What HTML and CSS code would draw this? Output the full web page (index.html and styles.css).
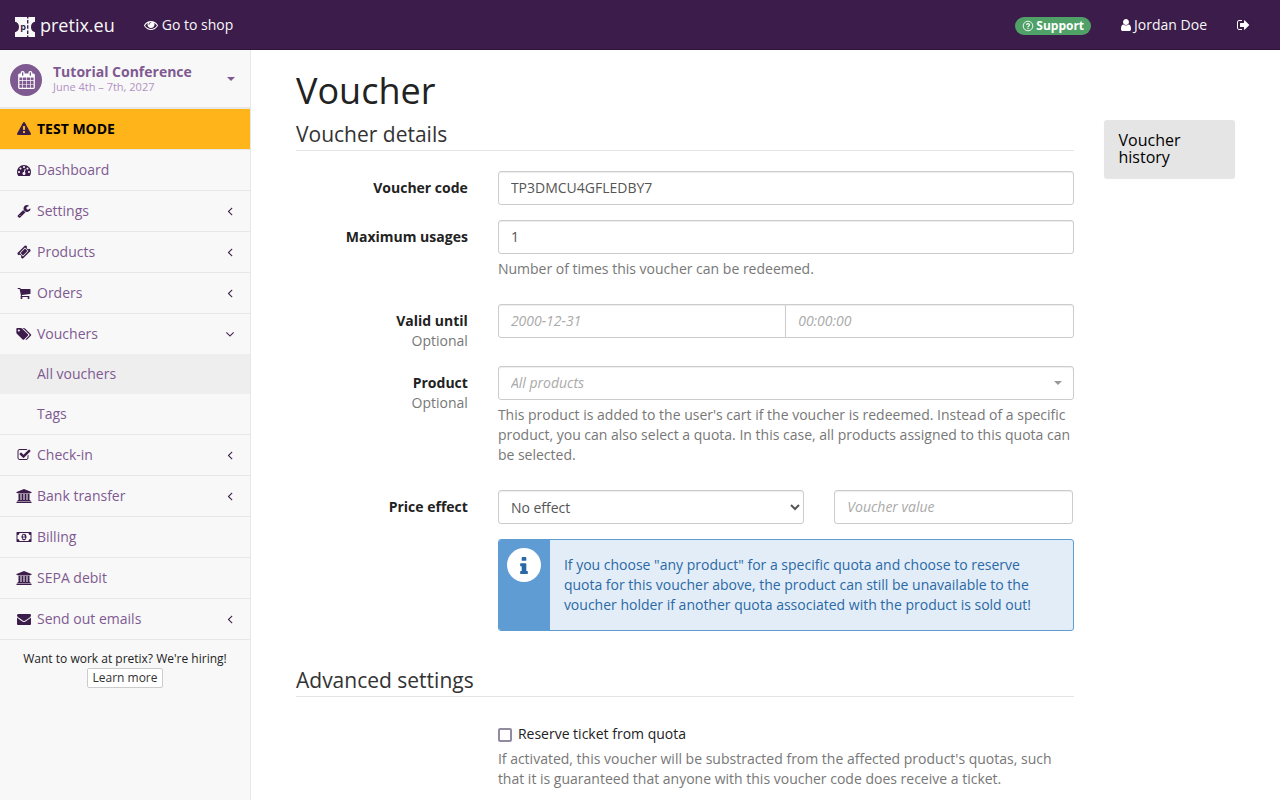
FILE: index.html
```html
<!DOCTYPE html>
<html lang="en">
<head>
<meta charset="utf-8">
<title>Voucher</title>
<link rel="stylesheet" href="styles.css">
</head>
<body>
<svg class="sprite" aria-hidden="true">
  <symbol id="i-angle-left" viewBox="0 0 1792 1792"><path d="M1203 544q0 13-10 23l-393 393 393 393q10 10 10 23t-10 23l-50 50q-10 10-23 10t-23-10l-466-466q-10-10-10-23t10-23l466-466q10-10 23-10t23 10l50 50q10 10 10 23z"/></symbol>
  <symbol id="i-angle-down" viewBox="0 0 1792 1792"><path d="M1395 736q0 13-10 23l-466 466q-10 10-23 10t-23-10l-466-466q-10-10-10-23t10-23l50-50q10-10 23-10t23 10l393 393 393-393q10-10 23-10t23 10l50 50q10 10 10 23z"/></symbol>
  <symbol id="i-bank" viewBox="0 0 1920 1792"><path d="M960 0l960 384v128h-128q0 26-20.500 45t-48.500 19h-1526q-28 0-48.500-19t-20.500-45h-128v-128zm-704 640h256v768h128v-768h256v768h128v-768h256v768h128v-768h256v768h59q28 0 48.500 19t20.500 45v64h-1664v-64q0-26 20.500-45t48.500-19h59v-768zm1595 960q28 0 48.500 19t20.500 45v128h-1920v-128q0-26 20.500-45t48.500-19h1782z"/></symbol>
</svg>

<header class="topbar">
  <a class="brand" href="#">
    <svg class="logo" viewBox="0 0 20 20" aria-hidden="true">
      <path fill="#f8f8f8" d="M0 0h12v1.500h1.400V0H20v4.800C17.500 5.200 16 7.200 16 10s1.500 4.800 4 5.200V20h-6.600v-1.500H12V20H0v-4.800C2.500 14.800 4 12.800 4 10S2.500 5.200 0 4.800z"/>
      <path stroke="#3b1c4a" stroke-width="1.400" d="M12.700 3v3.500M12.700 8.200v3.600M12.700 13.500V17"/>
      <text x="5.200" y="12.800" font-size="9" font-weight="700" fill="#3b1c4a">p</text>
    </svg>
    <span>pretix.eu</span>
  </a>
  <a class="toplink" href="#">
    <svg class="icon" viewBox="0 0 1792 1792" aria-hidden="true"><path d="M1664 960q-152-236-381-353 61 104 61 225 0 185-131.500 316.500t-316.500 131.500-316.500-131.500-131.500-316.500q0-121 61-225-229 117-381 353 133 205 333.500 326.500t434.500 121.500 434.500-121.500 333.500-326.500zm-720-384q0-20-14-34t-34-14q-125 0-214.500 89.500t-89.500 214.500q0 20 14 34t34 14 34-14 14-34q0-86 61-147t147-61q20 0 34-14t14-34zm848 384q0 34-20 69-140 230-376.500 368.500t-499.500 138.500-499.500-139-376.500-368q-20-35-20-69t20-69q140-229 376.500-368t499.500-139 499.500 139 376.500 368q20 35 20 69z"/></svg>
    <span>Go to shop</span>
  </a>
  <nav class="topright" aria-label="Account">
    <a class="toplink" href="#"><span class="badge">
      <svg class="badge-icon" viewBox="0 0 12 12" aria-hidden="true"><circle cx="6" cy="6" r="4.800" fill="none" stroke="#fff" stroke-width=".9"/><path d="M4.500 4.900Q4.600 3.600 6 3.600T7.500 4.900Q7.500 5.500 6.700 6T6 7.100M6 7.800v1.100" fill="none" stroke="#fff" stroke-width="1.100"/></svg>
      <span>Support</span></span></a>
    <a class="toplink user" href="#">
      <svg class="icon user-icon" viewBox="256 0 1280 1792" aria-hidden="true"><path d="M1536 1399q0 109-62.500 187t-150.500 78h-854q-88 0-150.500-78t-62.500-187q0-85 8.500-160.500t31.500-152 58.500-131 94-89 134.500-34.500q131 128 313 128t313-128q76 0 134.500 34.500t94 89 58.500 131 31.500 152 8.500 160.500zm-256-887q0 159-112.500 271.500t-271.500 112.500-271.500-112.500-112.500-271.500 112.500-271.500 271.500-112.500 271.500 112.500 112.500 271.500z"/></svg>
      <span>Jordan Doe</span>
    </a>
    <a class="toplink" href="#" aria-label="Log out">
      <svg class="icon out-icon" viewBox="64 0 1664 1792" aria-hidden="true"><path d="M704 1440q0 4 1 20t.5 26.500-3 23.500-10 19.500-20.500 6.500h-320q-119 0-203.500-84.500t-84.500-203.500v-704q0-119 84.500-203.500t203.500-84.500h320q13 0 22.500 9.500t9.500 22.500q0 4 1 20t.5 26.500-3 23.500-10 19.500-20.500 6.500h-320q-66 0-113 47t-47 113v704q0 66 47 113t113 47h312l11.500 1 11.500 3 8 5.500 7 9 2 13.500zm928-544q0 26-19 45l-544 544q-19 19-45 19t-45-19-19-45v-288h-448q-26 0-45-19t-19-45v-384q0-26 19-45t45-19h448v-288q0-26 19-45t45-19 45 19l544 544q19 19 19 45z"/></svg>
    </a>
  </nav>
</header>

<div class="layout">
  <aside class="sidebar">
    <button class="event" type="button">
      <span class="event-icon"><svg viewBox="64 0 1664 1792" aria-hidden="true"><path d="M192 1664h288v-288h-288v288zm352 0h320v-288h-320v288zm-352-352h288v-320h-288v320zm352 0h320v-320h-320v320zm-352-384h288v-288h-288v288zm736 736h320v-288h-320v288zm-384-736h320v-288h-320v288zm768 736h288v-288h-288v288zm-384-352h320v-320h-320v320zm-352-864v-288q0-13-9.500-22.500t-22.500-9.500h-64q-13 0-22.500 9.500t-9.500 22.500v288q0 13 9.500 22.500t22.500 9.500h64q13 0 22.500-9.500t9.500-22.500zm736 864h288v-320h-288v320zm-384-384h320v-288h-320v288zm384 0h288v-288h-288v288zm32-480v-288q0-13-9.500-22.500t-22.500-9.500h-64q-13 0-22.500 9.500t-9.500 22.500v288q0 13 9.500 22.500t22.500 9.500h64q13 0 22.500-9.500t9.500-22.500zm384-64v1280q0 52-38 90t-90 38h-1408q-52 0-90-38t-38-90v-1280q0-52 38-90t90-38h128v-96q0-66 47-113t113-47h64q66 0 113 47t47 113v96h384v-96q0-66 47-113t113-47h64q66 0 113 47t47 113v96h128q52 0 90 38t38 90z"/></svg></span>
      <span class="event-text"><span class="event-name">Tutorial Conference</span><span class="event-date">June 4th – 7th, 2027</span></span>
      <span class="caret"></span>
    </button>
    <nav aria-label="Event">
      <ul class="menu">
        <li class="menu-item"><a class="menu-link testmode" href="#"><svg class="menu-icon" viewBox="0 0 1792 1792" aria-hidden="true"><path d="M1024 1375v-190q0-14-9.500-23.500t-22.500-9.500h-192q-13 0-22.500 9.500t-9.500 23.500v190q0 14 9.500 23.500t22.500 9.500h192q13 0 22.500-9.500t9.500-23.500zm-2-374l18-459q0-12-10-19-13-11-24-11h-220q-11 0-24 11-10 7-10 21l17 457q0 10 10 16.500t24 6.500h185q14 0 23.500-6.500t10.500-16.500zm-14-934l768 1408q35 63-2 126-17 29-46.500 46t-63.500 17h-1536q-34 0-63.500-17t-46.500-46q-37-63-2-126l768-1408q17-31 47-49t65-18 65 18 47 49z"/></svg><span>TEST MODE</span></a></li>
        <li class="menu-item"><a class="menu-link" href="#"><svg class="menu-icon" viewBox="0 0 1792 1792" aria-hidden="true"><path d="M384 1152q0-53-37.500-90.500t-90.500-37.500-90.500 37.500-37.500 90.500 37.500 90.500 90.500 37.500 90.500-37.500 37.500-90.500zm192-448q0-53-37.500-90.500t-90.500-37.500-90.500 37.500-37.500 90.500 37.500 90.500 90.500 37.500 90.500-37.500 37.500-90.500zm428 481l101-382q6-26-7.500-48.500t-38.500-29.500-48 6.500-30 39.500l-101 382q-60 5-107 43.500t-63 98.500q-20 77 20 146t117 89 146-20 89-117q16-60-6-117t-72-91zm660-33q0-53-37.500-90.500t-90.500-37.500-90.500 37.500-37.500 90.500 37.500 90.500 90.500 37.500 90.500-37.500 37.500-90.500zm-640-640q0-53-37.500-90.500t-90.500-37.500-90.500 37.500-37.500 90.500 37.500 90.500 90.500 37.500 90.500-37.500 37.500-90.500zm448 192q0-53-37.500-90.500t-90.500-37.500-90.500 37.500-37.500 90.500 37.500 90.500 90.500 37.500 90.500-37.500 37.500-90.500zm320 448q0 261-141 483-19 29-54 29h-1402q-35 0-54-29-141-221-141-483 0-182 71-348t191-286 286-191 348-71 348 71 286 191 191 286 71 348z"/></svg><span>Dashboard</span></a></li>
        <li class="menu-item"><a class="menu-link" href="#"><svg class="menu-icon" viewBox="0 0 1792 1792" aria-hidden="true"><path d="M448 1472q0-26-19-45t-45-19-45 19-19 45 19 45 45 19 45-19 19-45zm644-420l-682 682q-37 37-90 37-52 0-91-37l-106-108q-38-36-38-90 0-53 38-91l681-681q39 98 114.500 173.500t173.500 114.500zm634-435q0 39-23 106-47 134-164.500 217.500t-258.500 83.500q-185 0-316.500-131.500t-131.500-316.500 131.500-316.500 316.500-131.500q58 0 121.500 16.500t107.500 46.500q16 11 16 28t-16 28l-293 169v224l193 107q5-3 79-48.500t135.500-81 70.500-35.500q15 0 23.500 10t8.500 25z"/></svg><span>Settings</span><svg class="arrow" aria-hidden="true"><use href="#i-angle-left"/></svg></a></li>
        <li class="menu-item"><a class="menu-link" href="#"><svg class="menu-icon" viewBox="0 0 1792 1792" aria-hidden="true"><path d="M1024 452l316 316-572 572-316-316zm-211 979l618-618q19-19 19-45t-19-45l-362-362q-18-18-45-18t-45 18l-618 618q-19 19-19 45t19 45l362 362q18 18 45 18t45-18zm889-637l-907 908q-37 37-90.500 37t-90.500-37l-126-126q56-56 56-136t-56-136-136-56-136 56l-125-126q-37-37-37-90.500t37-90.500l907-906q37-37 90.500-37t90.500 37l125 125q-56 56-56 136t56 136 136 56 136-56l126 125q37 37 37 90.500t-37 90.500z"/></svg><span>Products</span><svg class="arrow" aria-hidden="true"><use href="#i-angle-left"/></svg></a></li>
        <li class="menu-item"><a class="menu-link" href="#"><svg class="menu-icon" viewBox="0 0 1792 1792" aria-hidden="true"><path d="M704 1536q0 52-38 90t-90 38-90-38-38-90 38-90 90-38 90 38 38 90zm896 0q0 52-38 90t-90 38-90-38-38-90 38-90 90-38 90 38 38 90zm128-1088v512q0 24-16.500 42.500t-40.500 21.500l-1044 122q13 60 13 70 0 16-24 64h920q26 0 45 19t19 45-19 45-45 19h-1024q-26 0-45-19t-19-45q0-11 8-31.500t16-36 21.500-40 15.500-29.500l-177-823h-204q-26 0-45-19t-19-45 19-45 45-19h256q16 0 28.500 6.500t19.500 15.500 13 24.500 8 26 5.500 29.500 4.500 26h1201q26 0 45 19t19 45z"/></svg><span>Orders</span><svg class="arrow" aria-hidden="true"><use href="#i-angle-left"/></svg></a></li>
        <li class="menu-item">
          <a class="menu-link" href="#"><svg class="menu-icon" viewBox="0 0 1835 1792" aria-hidden="true"><path d="M384 448q0-53-37.500-90.500t-90.500-37.500-90.500 37.500-37.500 90.500 37.500 90.500 90.500 37.500 90.500-37.500 37.500-90.500zm1067 576q0 53-37 90l-491 492q-39 37-91 37-53 0-90-37l-715-716q-38-37-64.500-101t-26.500-117v-416q0-52 38-90t90-38h416q53 0 117 26.500t102 64.500l715 714q37 39 37 91zm384 0q0 53-37 90l-491 492q-39 37-91 37-36 0-59-14t-53-45l470-470q37-37 37-90 0-52-37-91l-715-714q-38-38-102-64.500t-117-26.500h224q53 0 117 26.500t102 64.500l715 714q37 39 37 91z"/></svg><span>Vouchers</span><svg class="arrow" aria-hidden="true"><use href="#i-angle-down"/></svg></a>
          <ul class="submenu">
            <li><a class="sub-link active" href="#" aria-current="page">All vouchers</a></li>
            <li><a class="sub-link" href="#">Tags</a></li>
          </ul>
        </li>
        <li class="menu-item"><a class="menu-link" href="#"><svg class="menu-icon" viewBox="0 0 1792 1792" aria-hidden="true"><path d="M1472 930v318q0 119-84.500 203.500t-203.500 84.500h-832q-119 0-203.500-84.500t-84.500-203.500v-832q0-119 84.500-203.500t203.500-84.500h832q63 0 117 25 15 7 18 23 3 17-9 29l-49 49q-10 10-23 10-3 0-9-2-23-6-45-6h-832q-66 0-113 47t-47 113v832q0 66 47 113t113 47h832q66 0 113-47t47-113v-254q0-13 9-22l64-64q10-10 23-10 6 0 12 3 20 8 20 29zm231-489l-814 814q-24 24-57 24t-57-24l-430-430q-24-24-24-57t24-57l110-110q24-24 57-24t57 24l263 263 647-647q24-24 57-24t57 24l110 110q24 24 24 57t-24 57z"/></svg><span>Check-in</span><svg class="arrow" aria-hidden="true"><use href="#i-angle-left"/></svg></a></li>
        <li class="menu-item"><a class="menu-link" href="#"><svg class="menu-icon" aria-hidden="true"><use href="#i-bank"/></svg><span>Bank transfer</span><svg class="arrow" aria-hidden="true"><use href="#i-angle-left"/></svg></a></li>
        <li class="menu-item"><a class="menu-link" href="#"><svg class="menu-icon" viewBox="0 0 1920 1792" aria-hidden="true"><path d="M768 1152h384v-96h-128v-448h-114l-148 137 77 80q42-37 55-57h2v288h-128v96zm512-256q0 70-21 142t-59.500 134-101.500 101-138 39-138-39-101.500-101-59.500-134-21-142 21-142 59.500-134 101.500-101 138-39 138 39 101.500 101 59.500 134 21 142zm512 256v-512q-106 0-181-75t-75-181h-1152q0 106-75 181t-181 75v512q106 0 181 75t75 181h1152q0-106 75-181t181-75zm128-832v1152q0 26-19 45t-45 19h-1792q-26 0-45-19t-19-45v-1152q0-26 19-45t45-19h1792q26 0 45 19t19 45z"/></svg><span>Billing</span></a></li>
        <li class="menu-item"><a class="menu-link" href="#"><svg class="menu-icon" aria-hidden="true"><use href="#i-bank"/></svg><span>SEPA debit</span></a></li>
        <li class="menu-item"><a class="menu-link" href="#"><svg class="menu-icon" viewBox="0 0 1792 1792" aria-hidden="true"><path d="M1792 710v794q0 66-47 113t-113 47h-1472q-66 0-113-47t-47-113v-794q44 49 101 87 362 246 497 345 57 42 92.500 65.500t94.500 48 110 24.500h2q51 0 110-24.500t94.500-48 92.500-65.500q170-123 498-345 57-39 100-87zm0-294q0 79-49 151t-122 123q-376 261-468 325-10 7-42.500 31t-54 38.500-52 32.500-57.500 27-50 9h-2q-23 0-50-9t-57.500-27-52-32.500-54-38.500-42.500-31q-91-64-262-182.500t-205-142.500q-62-42-117-115.500t-55-136.500q0-78 41.500-130t118.500-52h1472q65 0 112.500 47t47.500 113z"/></svg><span>Send out emails</span><svg class="arrow" aria-hidden="true"><use href="#i-angle-left"/></svg></a></li>
      </ul>
    </nav>
    <div class="hiring">
      <span>Want to work at pretix? We're hiring!</span>
      <a class="small-button" href="#">Learn more</a>
    </div>
  </aside>

  <main class="main">
    <h1 class="title">Voucher</h1>
    <div class="columns">
      <form class="form">
        <fieldset class="section">
          <legend class="section-title">Voucher details</legend>
          <div class="row">
            <label class="label" for="code">Voucher code</label>
            <div class="field"><input class="control" id="code" type="text" value="TP3DMCU4GFLEDBY7"></div>
          </div>
          <div class="row">
            <label class="label" for="usages">Maximum usages</label>
            <div class="field"><input class="control" id="usages" type="text" inputmode="numeric" value="1">
              <p class="help">Number of times this voucher can be redeemed.</p></div>
          </div>
          <div class="row">
            <label class="label" for="date">Valid until<span class="optional">Optional</span></label>
            <div class="field"><div class="joined">
              <input class="control" id="date" type="text" placeholder="2000-12-31">
              <input class="control" type="text" placeholder="00:00:00" aria-label="Valid until time">
            </div></div>
          </div>
          <div class="row">
            <label class="label" for="product">Product<span class="optional">Optional</span></label>
            <div class="field">
              <div class="picker"><select class="control" id="product"><option>All products</option></select></div>
              <p class="help">This product is added to the user's cart if the voucher is redeemed. Instead of a specific product, you can also select a quota. In this case, all products assigned to this quota can be selected.</p>
            </div>
          </div>
          <div class="row">
            <label class="label" for="effect">Price effect</label>
            <div class="price">
              <div class="price-effect"><select class="control effect" id="effect"><option>No effect</option></select></div>
              <div class="price-value"><input class="control" type="text" placeholder="Voucher value" aria-label="Voucher value"></div>
            </div>
          </div>
          <div class="row">
            <div class="field offset">
              <div class="notice">
                <div class="notice-side"><span class="notice-icon"><svg viewBox="576 128 640 1408" aria-hidden="true"><path d="M1216 1344v128q0 26-19 45t-45 19h-512q-26 0-45-19t-19-45v-128q0-26 19-45t45-19h64v-384h-64q-26 0-45-19t-19-45v-128q0-26 19-45t45-19h384q26 0 45 19t19 45v576h64q26 0 45 19t19 45zm-128-1152v192q0 26-19 45t-45 19h-256q-26 0-45-19t-19-45v-192q0-26 19-45t45-19h256q26 0 45 19t19 45z"/></svg></span></div>
                <p class="notice-text">If you choose "any product" for a specific quota and choose to reserve quota for this voucher above, the product can still be unavailable to the voucher holder if another quota associated with the product is sold out!</p>
              </div>
            </div>
          </div>
        </fieldset>
        <fieldset class="section">
          <legend class="section-title">Advanced settings</legend>
          <div class="row">
            <div class="field offset">
              <label class="check"><input class="tick" type="checkbox"><span>Reserve ticket from quota</span></label>
              <p class="help">If activated, this voucher will be substracted from the affected product's quotas, such that it is guaranteed that anyone with this voucher code does receive a ticket.</p>
            </div>
          </div>
        </fieldset>
      </form>
      <aside class="history"><h2 class="history-title">Voucher history</h2></aside>
    </div>
  </main>
</div>
</body>
</html>
```

FILE: styles.css
```css
* { box-sizing: border-box; }

body {
  margin: 0;
  min-height: 100vh;
  display: flex;
  flex-direction: column;
  background: #fff;
  color: #222;
  font: 14px/20px "Open Sans", sans-serif;
}

a { color: #7f5a91; text-decoration: none; }
ul { list-style: none; margin: 0; padding: 0; }
.sprite { display: none; }

/* Top bar */
.topbar {
  display: flex;
  align-items: center;
  height: 50px;
  background: #3b1c4a;
  border-bottom: 1px solid #2e1639;
}
.brand, .toplink {
  display: flex;
  align-items: center;
  padding: 0 15px;
  color: #f8f8f8;
}
.brand { gap: 5px; padding-right: 14px; font-size: 18px; }
.logo { width: 20px; height: 20px; margin-top: 4px; }
.toplink { gap: 4px; }
.icon { width: 14px; height: 14px; fill: #fff; }
.topright { display: flex; align-items: center; margin-left: auto; padding-right: 15px; }
.user-icon { width: 10px; }
.user { gap: 3px; }
.out-icon { width: 13px; }
.badge {
  display: flex;
  align-items: center;
  gap: 2px;
  height: 18px;
  margin-top: 3px;
  padding: 0 7px;
  border-radius: 9px;
  background: #50a167;
  color: #fff;
  font-size: 12px;
  font-weight: 700;
}
.badge-icon { width: 12px; height: 12px; }

/* Sidebar */
.layout { flex: 1; display: flex; }
.sidebar {
  flex: 0 0 251px;
  background: #f8f8f8;
  border-right: 1px solid #e7e7e7;
}
.event {
  display: flex;
  align-items: center;
  gap: 11px;
  width: 100%;
  height: 59px;
  padding: 0 15px 0 10px;
  border: 0;
  border-bottom: 2px solid #e7e7e7;
  background: none;
  color: #7f5a91;
  font: inherit;
  text-align: left;
}
.event-icon {
  display: flex;
  align-items: center;
  justify-content: center;
  width: 32px;
  height: 32px;
  margin-top: 2px;
  border-radius: 50%;
  background: #7f5a91;
}
.event-icon svg { width: 17px; height: 18px; fill: #fff; }
.event-text { flex: 1; display: flex; flex-direction: column; }
.event-name { font-weight: 700; line-height: 16px; }
.event-date { font-size: 11px; line-height: 14px; color: #b292c2; }
.caret { border: 4px solid transparent; border-top-color: #7f5a91; border-bottom: 0; }
.menu-item { border-bottom: 1px solid #e7e7e7; }
.menu-link {
  display: flex;
  align-items: center;
  gap: 4px;
  padding: 10px 13px 10px 15px;
}
.menu-icon { width: 18px; height: 14px; fill: #3b1c4a; }
.arrow { width: 14px; height: 14px; margin-left: auto; fill: #3b1c4a; }
.testmode { background: #ffb419; color: #000; font-weight: 700; }
.sub-link { display: block; padding: 10px 15px 10px 37px; }
.active { background: #eee; }
.hiring {
  display: flex;
  flex-direction: column;
  align-items: center;
  padding: 10px 15px;
  font-size: 12px;
  line-height: 18px;
}
.small-button {
  padding: 0 4px;
  border: 1px solid #ccc;
  border-radius: 2px;
  background: #fff;
  color: #333;
}

/* Content */
.main { flex: 1; min-width: 0; padding: 20px 45px 0; }
.title { margin: 0 0 8px; font-size: 36px; font-weight: 400; line-height: 42px; }
.columns { display: grid; grid-template-columns: 10fr 2fr; margin: 0 -15px; }
.form { min-width: 0; }
.section { min-width: 0; margin: 0 0 20px; padding: 0; border: 0; }
.section-title {
  width: calc(100% - 30px);
  margin: 0 15px 20px;
  padding: 0 0 2px;
  border-bottom: 1px solid #e5e5e5;
  color: #333;
  font-size: 21px;
  line-height: 28px;
}
.row { display: flex; margin-bottom: 15px; }
.label {
  flex: 0 0 25%;
  padding: 7px 15px 0;
  font-weight: 700;
  text-align: right;
}
.optional { display: block; color: #777; font-weight: 400; }
.field { flex: 1; min-width: 0; padding: 0 15px; }
.offset { margin-left: 25%; }
.control {
  display: block;
  width: 100%;
  height: 34px;
  margin: 0;
  padding: 5px 12px 7px;
  border: 1px solid #ccc;
  border-radius: 3px;
  background: #fff;
  box-shadow: inset 0 1px 1px rgba(0, 0, 0, 0.075);
  color: #555;
  font: inherit;
}
.control::placeholder { color: #aaa; font-style: italic; }
.help { margin: 5px 0 10px; color: #777; }
.joined { display: flex; }
.joined .control:first-child { border-radius: 3px 0 0 3px; }
.joined .control:last-child { margin-left: -1px; border-radius: 0 3px 3px 0; }
.picker { position: relative; }
.picker .control {
  appearance: none;
  padding: 6px 12px;
  color: #aaa;
  font-style: italic;
}
.picker::after {
  content: "";
  position: absolute;
  top: 15px;
  right: 12px;
  border: 4px solid transparent;
  border-top-color: #999;
  border-bottom: 0;
}
.price {
  flex: 1;
  display: grid;
  grid-template-columns: minmax(0, 5fr) minmax(0, 4fr);
  min-width: 0;
}
.price-effect, .price-value { padding: 0 15px; }
.effect { padding: 6px 8px; }
.notice {
  display: flex;
  overflow: hidden;
  border: 1px solid #5f9cd4;
  border-radius: 3px;
  background: #e3edf8;
}
.notice-side { flex: 0 0 51px; padding: 8px; background: #5f9cd4; }
.notice-icon {
  display: flex;
  align-items: center;
  justify-content: center;
  width: 34px;
  height: 34px;
  border-radius: 50%;
  background: #fff;
}
.notice-icon svg { width: 8px; height: 17px; fill: #2a69a6; }
.notice-text { margin: 0; padding: 15px 15px 15px 14px; color: #2a69a6; }
.check { display: flex; align-items: center; gap: 6px; padding-top: 7px; }
.tick {
  appearance: none;
  width: 14px;
  height: 14px;
  margin: 2px 0 0;
  border: 2px solid #918ba0;
  border-radius: 2px;
  background: #fff;
}
.history {
  align-self: start;
  margin: 0 15px;
  padding: 12px 15px;
  border-radius: 3px;
  background: #e5e5e5;
  box-shadow: 0 1px 1px rgba(0, 0, 0, 0.1);
  color: #000;
}
.history-title { margin: 0; font-size: 16px; font-weight: 400; line-height: 17px; }
```
